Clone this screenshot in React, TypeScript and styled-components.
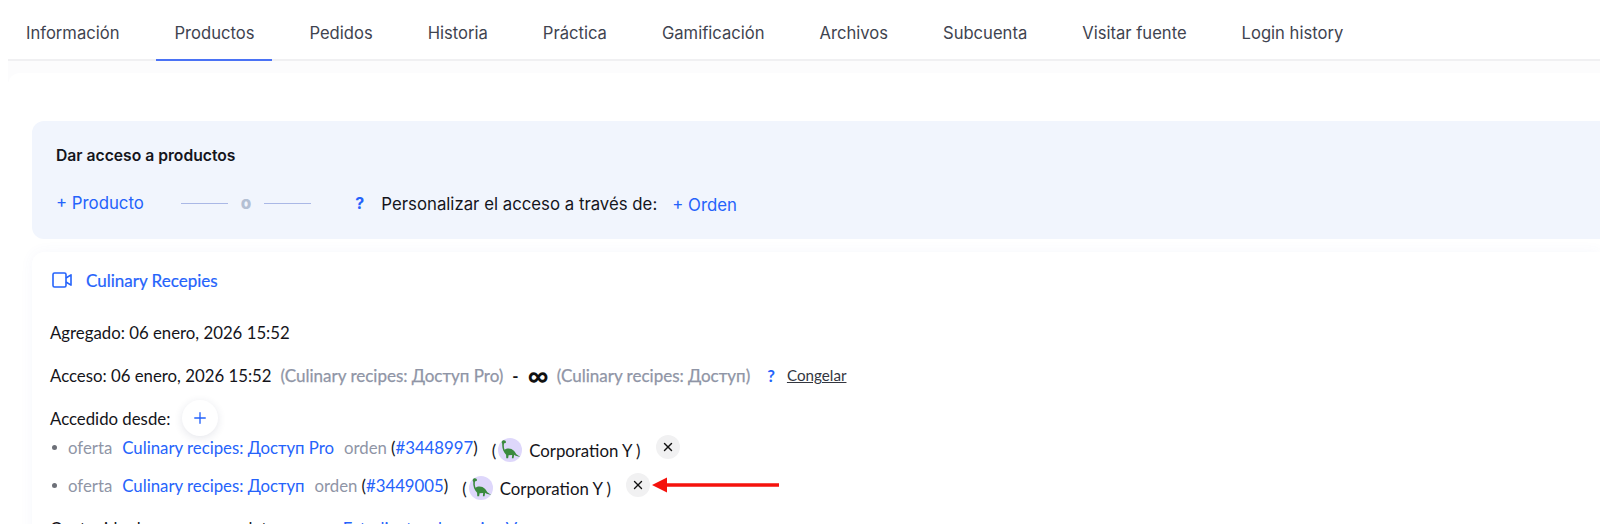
import React from "react";
import styled, { createGlobalStyle } from "styled-components";
import { Plus, X } from "lucide-react";

const tabs = [
  "Información",
  "Productos",
  "Pedidos",
  "Historia",
  "Práctica",
  "Gamificación",
  "Archivos",
  "Subcuenta",
  "Visitar fuente",
  "Login history",
];

const GlobalStyle = createGlobalStyle`
  html, body {
    margin: 0;
    height: 524px;
    overflow: hidden;
    background: #ffffff;
    font-family: "Lato", "Noto Sans", sans-serif;
    color: #14141a;
  }
`;

const Page = styled.div`
  height: 524px;
  overflow: hidden;
  padding-left: 8px;
`;

const TabBar = styled.nav`
  display: flex;
  gap: 19px;
  height: 61px;
  box-sizing: border-box;
  padding-top: 7px;
  border-bottom: 2px solid #f0f0f2;
`;

const Tab = styled.div<{ $active?: boolean }>`
  height: 54px;
  flex: none;
  box-sizing: border-box;
  padding: 0 18px;
  display: flex;
  align-items: center;
  font-family: "Inter", sans-serif;
  font-size: 16.6px;
  color: #3f4450;
  border-bottom: 2px solid ${(p) => (p.$active ? "#4a72f5" : "transparent")};
`;

const ContentArea = styled.div`
  background: #fcfcfd;
  padding-top: 12px;
`;

const Sheet = styled.div`
  background: #ffffff;
  border-radius: 12px 0 0 0;
  padding: 48px 0 0 24px;
  height: 600px;
`;

const AccessPanel = styled.section`
  height: 118px;
  box-sizing: border-box;
  background: #f1f5fd;
  border-radius: 12px 0 0 12px;
  padding: 25px 0 0 24px;
`;

const PanelTitle = styled.div`
  font-family: "Inter", sans-serif;
  font-size: 15.7px;
  font-weight: 600;
  line-height: 20px;
  color: #15151c;
`;

const PanelRow = styled.div`
  display: flex;
  align-items: center;
  margin-top: 25px;
  height: 24px;
  font-family: "Inter", sans-serif;
  font-size: 16.8px;
`;

const BlueAction = styled.span<{ $drop?: boolean }>`
  color: #2563fb;
  margin-top: ${(p) => (p.$drop ? "3px" : "0")};
`;

const Divider = styled.div`
  display: flex;
  align-items: center;
  gap: 13px;
  margin-left: 37px;
  margin-right: 44px;
  color: #b4c0d4;
  font-weight: 800;
  font-size: 17px;
`;

const DividerLine = styled.span`
  width: 47px;
  height: 1px;
  background: #aab8e6;
`;

const PanelHelp = styled.span`
  color: #2563fb;
  font-weight: 700;
  font-size: 16px;
`;

const PersonalLabel = styled.span`
  margin: 1px 15px 0 17px;
  color: #15151c;
`;

const ProductCard = styled.section`
  margin-top: 13px;
  background: #ffffff;
  border-radius: 12px 0 0 0;
  box-shadow: 0 0 14px rgba(70, 90, 200, 0.05);
  padding: 12px 0 0 18px;
`;

const ProductTitle = styled.div`
  display: flex;
  align-items: center;
  height: 32px;
  gap: 14px;
  color: #2563fb;
  font-size: 17px;
  padding-left: 2px;
  -webkit-text-stroke: 0.2px #2563fb;
`;

const InfoLine = styled.div`
  display: flex;
  align-items: center;
  font-size: 16.8px;
  height: 24px;
  white-space: pre;
`;

const AddedLine = styled(InfoLine)`
  margin-top: 24px;
`;

const AccessLine = styled(InfoLine)`
  margin-top: 19px;
`;

const Muted = styled.span`
  color: #8f95a6;
`;

const OfferNote = styled(Muted)`
  -webkit-text-stroke: 0.25px #8f95a6;
  margin-left: 9px;
  font-size: 17px;
`;

const EndOfferNote = styled(OfferNote)`
  margin-left: 0;
`;

const Dash = styled.span`
  font-weight: 700;
  margin-left: 9px;
`;

const InfinityMark = styled.span`
  font-size: 29px;
  font-weight: 700;
  line-height: 24px;
  margin: 0 8px 0 9px;
  color: #111;
`;

const HelpMark = styled.span`
  color: #2563fb;
  font-weight: 700;
  margin-left: 17px;
`;

const Freeze = styled.span`
  font-size: 15.2px;
  color: #33363f;
  text-decoration: underline;
  margin-left: 12px;
`;

const SourcesHeader = styled(InfoLine)`
  height: 36px;
  margin-top: 13px;
  gap: 12px;
`;

const RoundAdd = styled.span`
  width: 36px;
  height: 36px;
  border-radius: 50%;
  display: flex;
  align-items: center;
  justify-content: center;
  color: #2563fb;
  background: #fff;
  box-shadow: 0 2px 8px rgba(40, 50, 90, 0.12);
`;

const SourceList = styled.ul`
  list-style: none;
  margin: -8px 0 0;
  padding: 0;
`;

const SourceItem = styled.li`
  display: flex;
  align-items: center;
  height: 38px;
  font-size: 16.8px;
  white-space: pre;
`;

const Bullet = styled.span`
  width: 5px;
  height: 5px;
  border-radius: 50%;
  background: #6d7078;
  margin: 0 11px 0 2px;
`;

const OfferLabel = styled(Muted)`
  margin-right: 10px;
`;

const OrderLabel = styled(Muted)`
  margin: 0 4px 0 10px;
`;

const Link = styled.span`
  color: #2563fb;
`;

const Owner = styled.span`
  display: flex;
  align-items: center;
  margin: 6px 15px 0 14px;
  font-size: 16.8px;
`;

const Avatar = styled.span`
  width: 24px;
  height: 24px;
  border-radius: 50%;
  background: #ded7fb;
  display: flex;
  align-items: center;
  justify-content: center;
  margin: 0 7px 0 2px;
`;

const RemoveButton = styled.span`
  width: 24px;
  height: 24px;
  margin-top: -1px;
  border-radius: 50%;
  background: #f1f1f2;
  display: flex;
  align-items: center;
  justify-content: center;
  color: #111;
`;

const ContentLine = styled(InfoLine)`
  margin-top: 12px;
`;

const ContentLink = styled(Link)`
  margin-left: 62px;
`;

const Arrow = styled.svg`
  position: absolute;
  left: 652px;
  top: 475px;
`;

const VideoIcon = () => (
  <svg width="20" height="16" viewBox="0 0 20 16" fill="none" stroke="#2563fb" strokeWidth="1.6">
    <rect x="1" y="1" width="13" height="14" rx="1.5" />
    <path d="M14 6 19 2.800v10.400L14 10" strokeLinejoin="round" />
  </svg>
);

const Dino = () => (
  <svg width="24" height="22" viewBox="0 0 22 20">
    <path
      d="M4 1.500c1.600-1 3.300-.3 3.300 1.300 0 .6-.8.9-1.700.9-.4 1.700-.4 4 .4 6 1.500-1.200 4.300-1.500 6.300-.6 2 .9 3.200 2.700 4.500 4.700l3.700 2.700-4.300-1.200-1.300-1-.7 3.200h-1.500l.3-3-3.300.4-.4 2.600H7.600l-.2-3.100C5 12 3.500 8 3.900 4.200 3.400 4 3 2.500 4 1.500z"
      fill="#3a8a3e"
    />
  </svg>
);

const sources = [
  { offer: "Culinary recipes: Доступ Pro", order: "#3448997" },
  { offer: "Culinary recipes: Доступ", order: "#3449005" },
];

export default function App() {
  return (
    <Page>
      <GlobalStyle />
      <TabBar>
        {tabs.map((tab) => (
          <Tab key={tab} $active={tab === "Productos"}>
            {tab}
          </Tab>
        ))}
      </TabBar>

      <ContentArea>
        <Sheet>
          <AccessPanel>
            <PanelTitle>Dar acceso a productos</PanelTitle>
            <PanelRow>
              <BlueAction>+ Producto</BlueAction>
              <Divider>
                <DividerLine />o<DividerLine />
              </Divider>
              <PanelHelp>?</PanelHelp>
              <PersonalLabel>Personalizar el acceso a través de:</PersonalLabel>
              <BlueAction $drop>+ Orden</BlueAction>
            </PanelRow>
          </AccessPanel>

          <ProductCard>
            <ProductTitle>
              <VideoIcon />
              Culinary Recepies
            </ProductTitle>
            <AddedLine>Agregado: 06 enero, 2026 15:52</AddedLine>
            <AccessLine>
              Acceso: 06 enero, 2026 15:52
              <OfferNote>(Culinary recipes: Доступ Pro)</OfferNote>
              <Dash>-</Dash>
              <InfinityMark>∞</InfinityMark>
              <EndOfferNote>(Culinary recipes: Доступ)</EndOfferNote>
              <HelpMark>?</HelpMark>
              <Freeze>Congelar</Freeze>
            </AccessLine>
            <SourcesHeader>
              Accedido desde:
              <RoundAdd>
                <Plus size={18} strokeWidth={1.8} />
              </RoundAdd>
            </SourcesHeader>
            <SourceList>
              {sources.map((source) => (
                <SourceItem key={source.order}>
                  <Bullet />
                  <OfferLabel>oferta</OfferLabel>
                  <Link>{source.offer}</Link>
                  <OrderLabel>orden</OrderLabel>(<Link>{source.order}</Link>)
                  <Owner>
                    (
                    <Avatar>
                      <Dino />
                    </Avatar>
                    Corporation Y )
                  </Owner>
                  <RemoveButton>
                    <X size={14} strokeWidth={2.4} />
                  </RemoveButton>
                </SourceItem>
              ))}
            </SourceList>
            <ContentLine>
              Contenido de acceso completo:
              <ContentLink>Estudiantes de cocina V</ContentLink>
            </ContentLine>
          </ProductCard>
        </Sheet>
      </ContentArea>

      <Arrow width="130" height="20" viewBox="0 0 130 20">
        <path d="M0 10 15 2.500V8.200H127V11.800H15V17.500Z" fill="#f5120c" />
      </Arrow>
    </Page>
  );
}
